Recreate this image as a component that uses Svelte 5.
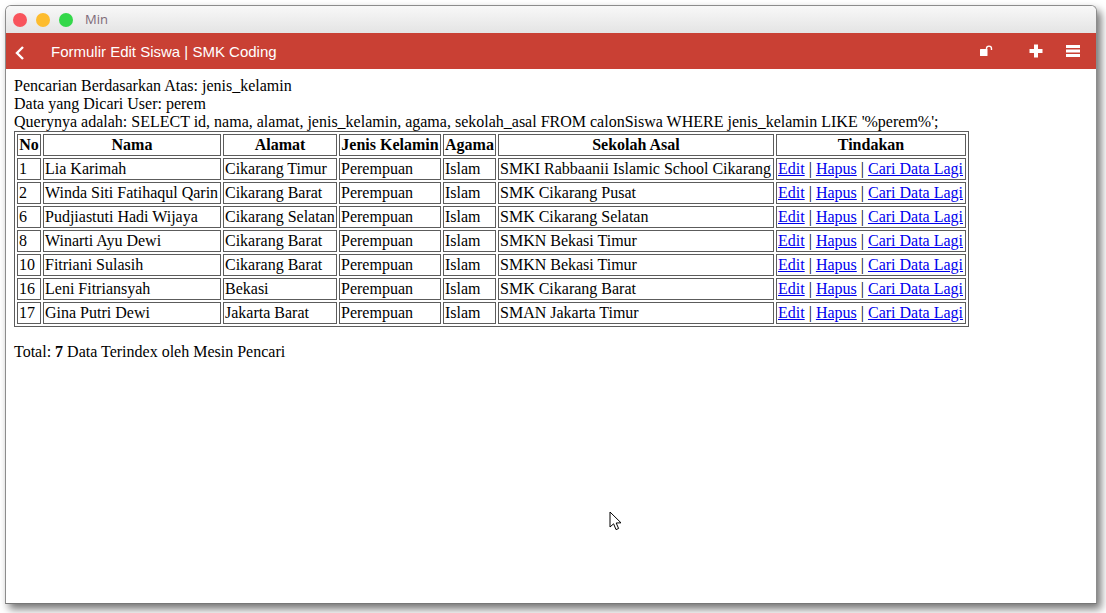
<script>
  const rows = [
    [1, "Lia Karimah", "Cikarang Timur", "SMKI Rabbaanii Islamic School Cikarang"],
    [2, "Winda Siti Fatihaqul Qarin", "Cikarang Barat", "SMK Cikarang Pusat"],
    [6, "Pudjiastuti Hadi Wijaya", "Cikarang Selatan", "SMK Cikarang Selatan"],
    [8, "Winarti Ayu Dewi", "Cikarang Barat", "SMKN Bekasi Timur"],
    [10, "Fitriani Sulasih", "Cikarang Barat", "SMKN Bekasi Timur"],
    [16, "Leni Fitriansyah", "Bekasi", "SMK Cikarang Barat"],
    [17, "Gina Putri Dewi", "Jakarta Barat", "SMAN Jakarta Timur"]
  ];
</script>

<div class="desktop">
  <div class="window">
    <div class="titlebar">
      <span class="dot red"></span>
      <span class="dot yellow"></span>
      <span class="dot green"></span>
      <span class="min">Min</span>
    </div>
    <div class="appbar">
      <svg class="back" width="12" height="16" viewBox="0 0 12 16">
        <path d="M9 2 L3 8 L9 14" fill="none" stroke="#fff" stroke-width="2.4" />
      </svg>
      <span class="title">Formulir Edit Siswa | SMK Coding</span>
      <div class="actions">
        <svg class="lock" width="14" height="12" viewBox="0 0 14 12">
          <rect x="0" y="4" width="7.5" height="7" rx="0.5" fill="#fff" />
          <path d="M6.5 4.5 V3.6 A2.5 2.5 0 0 1 11.5 3.6 V5" fill="none" stroke="#fff" stroke-width="1.4" />
        </svg>
        <svg class="plus" width="14" height="14" viewBox="0 0 14 14">
          <path d="M5 0.5 H9 V5 H13.5 V9 H9 V13.5 H5 V9 H0.5 V5 H5 Z" fill="#fff" />
        </svg>
        <svg class="menu" width="14" height="12" viewBox="0 0 14 12">
          <rect x="0" y="0" width="14" height="3" fill="#fff" />
          <rect x="0" y="4.5" width="14" height="3" fill="#fff" />
          <rect x="0" y="9" width="14" height="3" fill="#fff" />
        </svg>
      </div>
    </div>
    <div class="content">
      Pencarian Berdasarkan Atas: jenis_kelamin<br />
      Data yang Dicari User: perem<br />
      Querynya adalah: SELECT id, nama, alamat, jenis_kelamin, agama, sekolah_asal FROM calonSiswa WHERE jenis_kelamin LIKE '%perem%';
      <table>
        <thead>
          <tr>
            <th>No</th>
            <th>Nama</th>
            <th>Alamat</th>
            <th>Jenis Kelamin</th>
            <th>Agama</th>
            <th>Sekolah Asal</th>
            <th>Tindakan</th>
          </tr>
        </thead>
        <tbody>
          {#each rows as r}
            <tr>
              <td>{r[0]}</td>
              <td>{r[1]}</td>
              <td>{r[2]}</td>
              <td>Perempuan</td>
              <td>Islam</td>
              <td>{r[3]}</td>
              <td><a href="#edit">Edit</a> | <a href="#hapus">Hapus</a> | <a href="#cari">Cari Data Lagi</a></td>
            </tr>
          {/each}
        </tbody>
      </table>
      <div class="total">Total: <b>7</b> Data Terindex oleh Mesin Pencari</div>
    </div>
  </div>
  <svg class="cursor" width="14" height="21" viewBox="0 0 14 21">
    <path d="M1 1 V16 L4.6 12.8 L7 18.6 L9.6 17.5 L7.2 12 L12 11.8 Z" fill="#fff" stroke="#000" stroke-width="1" />
  </svg>
</div>

<style>
  :global(body) {
    background: #fff;
  }
  .desktop {
    position: relative;
    width: 1106px;
    height: 613px;
    padding: 5px 0 0 5px;
    box-sizing: border-box;
    overflow: hidden;
  }
  .window {
    width: 1090px;
    height: 597px;
    border: 1px solid #8c8c8c;
    border-bottom-color: #777;
    border-radius: 6px 6px 0 0;
    background: #fff;
    box-shadow: 4px 5px 8px rgba(0, 0, 0, 0.55);
  }
  .titlebar {
    height: 27px;
    display: flex;
    align-items: center;
    padding-left: 7px;
    gap: 9px;
    border-radius: 5px 5px 0 0;
    background: linear-gradient(#f8f8f8, #e4e4e4);
    box-sizing: border-box;
  }
  .dot {
    width: 14px;
    height: 14px;
    border-radius: 50%;
  }
  .red { background: #f8545c; }
  .yellow { background: #fdbc2e; }
  .green { background: #34d84a; }
  .min {
    margin-left: 3px;
    margin-bottom: 2px;
    font: 13px "Open Sans", sans-serif;
    color: #7d6a78;
  }
  .appbar {
    height: 36px;
    display: flex;
    align-items: center;
    background: #c94034;
    color: #fff;
  }
  .back {
    margin-left: 8px;
    margin-top: 3px;
  }
  .title {
    margin-left: 25px;
    font: 15px "Liberation Sans", sans-serif;
  }
  .actions {
    margin-left: auto;
    display: flex;
    align-items: center;
    margin-right: 16px;
  }
  .plus {
    margin-left: 35px;
  }
  .menu {
    margin-left: 23px;
  }
  .content {
    padding: 8px;
    font: 16px "Liberation Serif", serif;
    color: #000;
  }
  table {
    width: 955px;
    table-layout: fixed;
    box-sizing: border-box;
    border: 1px solid #5c5c5c;
    border-spacing: 2px;
    border-collapse: separate;
  }
  th, td {
    border: 1px solid #5c5c5c;
    padding: 1px;
    box-sizing: border-box;
    white-space: nowrap;
  }
  th:nth-child(1) { width: 24px; }
  th:nth-child(2) { width: 178px; }
  th:nth-child(3) { width: 114px; }
  th:nth-child(4) { width: 102px; }
  th:nth-child(5) { width: 53px; }
  th:nth-child(6) { width: 276px; }
  th:nth-child(7) { width: 190px; }
  a {
    color: #00e;
    text-decoration: underline;
  }
  .total {
    margin-top: 16px;
  }
  .cursor {
    position: absolute;
    left: 609px;
    top: 511px;
  }
</style>
